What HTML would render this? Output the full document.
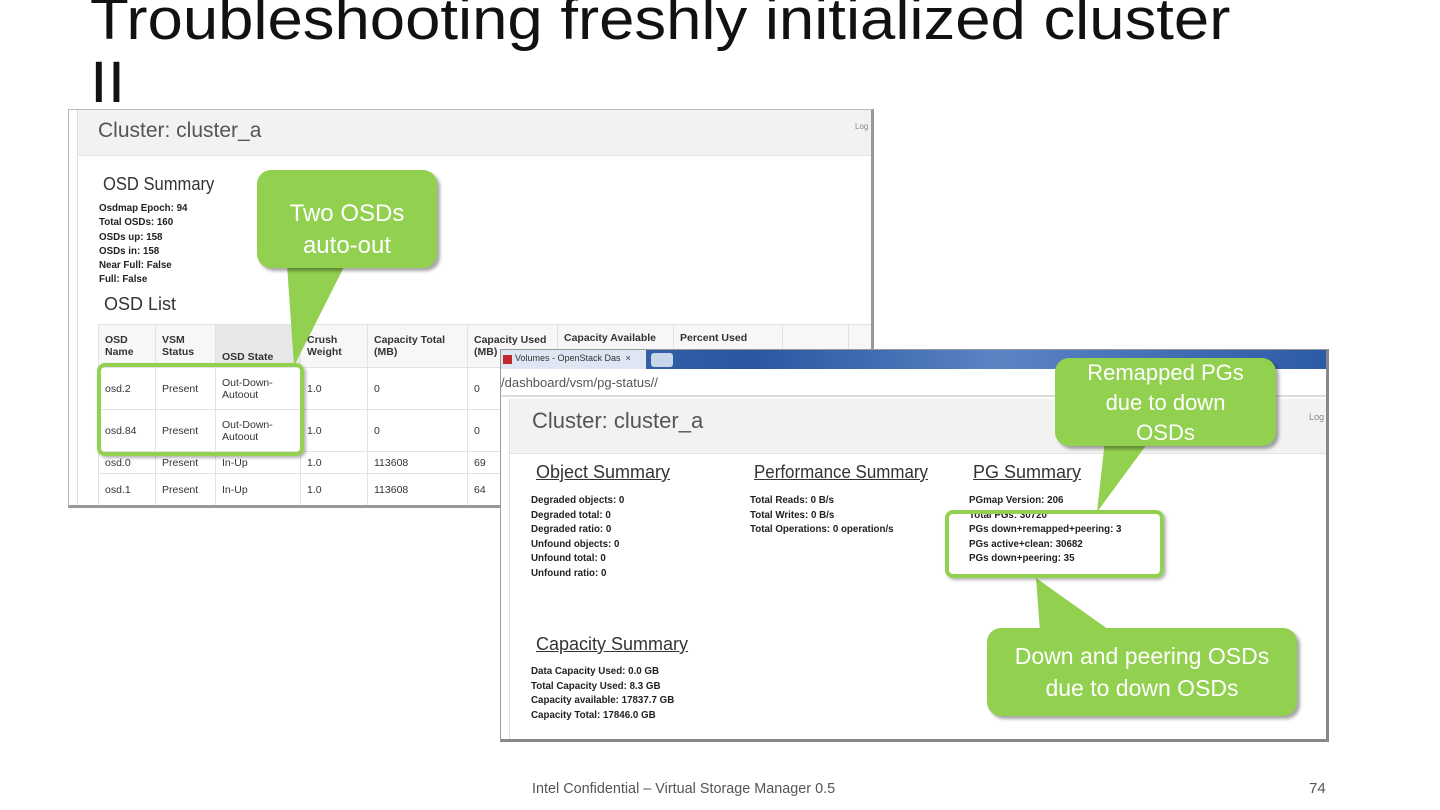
<!DOCTYPE html>
<html><head><meta charset="utf-8"><style>
*{margin:0;padding:0;box-sizing:border-box}
body{width:1440px;height:810px;background:#fff;position:relative;overflow:hidden;font-family:"Liberation Sans",sans-serif}
.abs{position:absolute}
.title{left:90px;top:-12px;font-size:58px;line-height:63px;color:#111;white-space:nowrap;transform:scaleX(1.094);transform-origin:left top}
.shot{background:#fff}
.small{font-size:10.5px;line-height:14.3px;color:#222;font-weight:bold;transform:scaleX(0.93);transform-origin:left top;white-space:nowrap}
.h2{font-size:18px;color:#333;white-space:nowrap}
table{border-collapse:collapse;font-size:10.5px;color:#333}
td{border:1px solid #e2e2e2;padding:0 6px;vertical-align:middle}
.callout{background:#92d050;border-radius:14px;color:#fff;text-align:center;font-size:24px;line-height:32px;box-shadow:3px 3px 3px rgba(0,0,0,.35)}
.hl{border:4px solid #92d050;border-radius:8px;box-shadow:2px 2px 3px rgba(0,0,0,.3)}
u{text-decoration:underline}
</style></head><body>
<div class="abs title">Troubleshooting freshly initialized cluster<br>II</div>

<!-- screenshot 1 -->
<div class="abs shot" style="left:68px;top:109px;width:806px;height:399px;border:1px solid #bbb;border-right:3px solid #999;border-bottom:3px solid #999;overflow:hidden">
  <div class="abs" style="left:8px;top:0;width:1px;height:396px;background:#ddd"></div>
  <div class="abs" style="left:9px;top:0;width:793px;height:46px;background:#f2f2f2;border-bottom:1px solid #e5e5e5"></div>
  <div class="abs" style="left:29px;top:9px;font-size:21px;color:#555">Cluster: cluster_a</div>
  <div class="abs" style="left:786px;top:12px;font-size:8px;color:#888">Log</div>
  <div class="abs h2" style="left:34px;top:64px;transform:scaleX(0.92);transform-origin:left top">OSD Summary</div>
  <div class="abs small" style="left:30px;top:91px">Osdmap Epoch: 94<br>Total OSDs: 160<br>OSDs up: 158<br>OSDs in: 158<br>Near Full: False<br>Full: False</div>
  <div class="abs h2" style="left:35px;top:184px">OSD List</div>
  <table class="abs" style="left:29px;top:214px;width:790px">
    <tr style="height:43px;font-weight:bold;background:#f7f7f7"><td style="width:57px">OSD<br>Name</td><td style="width:60px">VSM<br>Status</td><td style="width:85px;background:#e8e8e8;vertical-align:bottom;padding-bottom:4px">OSD State</td><td style="width:67px">Crush<br>Weight</td><td style="width:100px">Capacity Total<br>(MB)</td><td style="width:90px">Capacity Used<br>(MB)</td><td style="width:116px;vertical-align:top;padding-top:7px">Capacity Available</td><td style="width:109px;vertical-align:top;padding-top:7px">Percent Used</td><td style="width:66px"></td><td></td></tr>
    <tr style="height:42px"><td>osd.2</td><td>Present</td><td>Out-Down-<br>Autoout</td><td>1.0</td><td>0</td><td>0</td><td></td><td></td><td></td><td></td></tr>
    <tr style="height:42px"><td>osd.84</td><td>Present</td><td>Out-Down-<br>Autoout</td><td>1.0</td><td>0</td><td>0</td><td></td><td></td><td></td><td></td></tr>
    <tr style="height:22px"><td>osd.0</td><td>Present</td><td>In-Up</td><td>1.0</td><td>113608</td><td>69</td><td></td><td></td><td></td><td></td></tr>
    <tr style="height:32px"><td>osd.1</td><td>Present</td><td>In-Up</td><td>1.0</td><td>113608</td><td>64</td><td></td><td></td><td></td><td></td></tr>
  </table>
</div>

<svg class="abs" style="left:0;top:0" width="1440" height="810">
  <polygon points="287,265 345,265 294,366" fill="#92d050"/>
</svg>
<div class="abs hl" style="left:97px;top:363px;width:207px;height:93px"></div>
<div class="abs callout" style="left:257px;top:170px;width:180px;height:98px;padding-top:28px">Two OSDs<br>auto-out</div>

<!-- screenshot 2 -->
<div class="abs shot" style="left:500px;top:349px;width:829px;height:393px;border:1px solid #999;border-right:3px solid #888;border-bottom:3px solid #888;overflow:hidden">
  <div class="abs" style="left:0;top:0;width:829px;height:19px;background:linear-gradient(90deg,#3e6db0,#2b55a0 30%,#5a84c4 60%,#2d5aa5)"></div>
  <div class="abs" style="left:0;top:0;width:145px;height:19px;background:#dde6f2"></div>
  <div class="abs" style="left:2px;top:5px;width:9px;height:9px;background:#c0272d"></div>
  <div class="abs" style="left:14px;top:3px;font-size:9px;color:#333;white-space:nowrap">Volumes - OpenStack Das &nbsp;×</div>
  <div class="abs" style="left:150px;top:3px;width:22px;height:14px;background:#c8d6ea;border-radius:3px"></div>
  <div class="abs" style="left:0;top:19px;width:829px;height:28px;background:#fff;border-bottom:2px solid #ddd"></div>
  <div class="abs" style="left:0;top:25px;font-size:13px;color:#555">/dashboard/vsm/pg-status//</div>
  <div class="abs" style="left:8px;top:49px;width:1px;height:350px;background:#ddd"></div>
  <div class="abs" style="left:9px;top:49px;width:820px;height:55px;background:#f2f2f2;border-bottom:1px solid #e5e5e5"></div>
  <div class="abs" style="left:31px;top:58px;font-size:22px;color:#555">Cluster: cluster_a</div>
  <div class="abs" style="left:808px;top:62px;font-size:9px;color:#888">Log</div>
  <div class="abs h2" style="left:35px;top:112px"><u>Object Summary</u></div>
  <div class="abs h2" style="left:253px;top:112px;transform:scaleX(0.94);transform-origin:left top"><u>Performance Summary</u></div>
  <div class="abs h2" style="left:472px;top:112px"><u>PG Summary</u></div>
  <div class="abs small" style="left:30px;top:143px;line-height:14.6px">Degraded objects: 0<br>Degraded total: 0<br>Degraded ratio: 0<br>Unfound objects: 0<br>Unfound total: 0<br>Unfound ratio: 0</div>
  <div class="abs small" style="left:249px;top:143px;line-height:14.6px">Total Reads: 0 B/s<br>Total Writes: 0 B/s<br>Total Operations: 0 operation/s</div>
  <div class="abs small" style="left:444px;top:143px;line-height:14.6px;left:468px">PGmap Version: 206<br>Total PGs: 30720<br>PGs down+remapped+peering: 3<br>PGs active+clean: 30682<br>PGs down+peering: 35</div>
  <div class="abs h2" style="left:35px;top:284px"><u>Capacity Summary</u></div>
  <div class="abs small" style="left:30px;top:314px;line-height:14.6px">Data Capacity Used: 0.0 GB<br>Total Capacity Used: 8.3 GB<br>Capacity available: 17837.7 GB<br>Capacity Total: 17846.0 GB</div>
</div>

<svg class="abs" style="left:0;top:0" width="1440" height="810">
  <polygon points="1105,440 1150,440 1097,512" fill="#92d050"/>
  <polygon points="1036,578 1040,632 1112,632" fill="#92d050"/>
</svg>
<div class="abs hl" style="left:945px;top:510px;width:219px;height:68px"></div>
<div class="abs callout" style="left:1055px;top:358px;width:221px;height:88px;font-size:22px;line-height:30px;padding-top:0">Remapped PGs<br>due to down<br>OSDs</div>
<div class="abs callout" style="left:987px;top:628px;width:310px;height:88px;padding-top:12px;font-size:23px">Down and peering OSDs<br>due to down OSDs</div>

<div class="abs" style="left:532px;top:780px;font-size:15px;color:#555;transform:scaleX(0.96);transform-origin:left top">Intel Confidential – Virtual Storage Manager 0.5</div>
<div class="abs" style="left:1309px;top:780px;font-size:15px;color:#555">74</div>
</body></html>
